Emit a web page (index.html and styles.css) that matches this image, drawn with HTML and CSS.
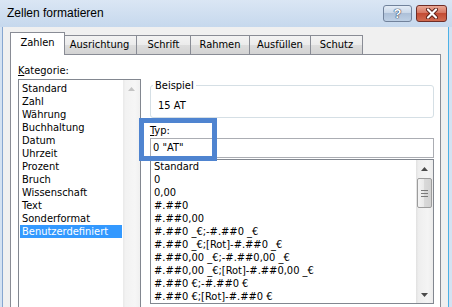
FILE: index.html
```html
<!DOCTYPE html>
<html lang="de">
<head>
    <meta charset="UTF-8">
    <title>Zellen formatieren</title>
    <link rel="stylesheet" href="styles.css">
</head>
<body>
    <div class="window">
        <div class="titlebar">
            <span class="title">Zellen formatieren</span>
            <div class="caption-buttons">
                <div class="cap-btn help">?</div>
                <div class="cap-btn close">
                    <svg width="14" height="11" viewBox="0 0 14 11">
                        <path d="M3 1.5 L11 9.5 M11 1.5 L3 9.5" stroke="#5b1f16" stroke-width="4" stroke-linecap="round"/>
                        <path d="M3 1.5 L11 9.5 M11 1.5 L3 9.5" stroke="#fff" stroke-width="2.2" stroke-linecap="round"/>
                    </svg>
                </div>
            </div>
        </div>

        <div class="client">
            <div class="tabs">
                <div class="tab active">Zahlen</div>
                <div class="tab">Ausrichtung</div>
                <div class="tab">Schrift</div>
                <div class="tab">Rahmen</div>
                <div class="tab">Ausfüllen</div>
                <div class="tab">Schutz</div>
            </div>

            <div class="panel">
                <div class="col-left">
                    <div class="label"><u>K</u>ategorie:</div>
                    <div class="listbox cat-list">
                        <ul class="items">
                            <li>Standard</li>
                            <li>Zahl</li>
                            <li>Währung</li>
                            <li>Buchhaltung</li>
                            <li>Datum</li>
                            <li>Uhrzeit</li>
                            <li>Prozent</li>
                            <li>Bruch</li>
                            <li>Wissenschaft</li>
                            <li>Text</li>
                            <li>Sonderformat</li>
                            <li class="selected">Benutzerdefiniert</li>
                        </ul>
                        <div class="scrollbar disabled">
                            <div class="arrow up">
                                <svg width="7" height="4" viewBox="0 0 7 4"><polygon points="0,4 3.5,0 7,4" fill="#c4c4c4"/></svg>
                            </div>
                        </div>
                    </div>
                </div>

                <div class="col-right">
                    <fieldset class="sample">
                        <legend>Beispiel</legend>
                        <div class="sample-value">15 AT</div>
                    </fieldset>

                    <div class="type-block">
                        <div class="label"><u>T</u>yp:</div>
                        <div class="textbox">0 "AT"</div>
                        <div class="highlight"></div>
                    </div>

                    <div class="listbox fmt-list">
                        <ul class="items">
                            <li>Standard</li>
                            <li>0</li>
                            <li>0,00</li>
                            <li>#.##0</li>
                            <li>#.##0,00</li>
                            <li>#.##0 _€;-#.##0 _€</li>
                            <li>#.##0 _€;[Rot]-#.##0 _€</li>
                            <li>#.##0,00 _€;-#.##0,00 _€</li>
                            <li>#.##0,00 _€;[Rot]-#.##0,00 _€</li>
                            <li>#.##0 €;-#.##0 €</li>
                            <li>#.##0 €;[Rot]-#.##0 €</li>
                        </ul>
                        <div class="scrollbar">
                            <div class="arrow up">
                                <svg width="7" height="4" viewBox="0 0 7 4"><polygon points="0,4 3.5,0 7,4" fill="#4a4a4a"/></svg>
                            </div>
                            <div class="thumb"><span class="grip"></span></div>
                            <div class="arrow down">
                                <svg width="7" height="4" viewBox="0 0 7 4"><polygon points="0,0 3.5,4 7,0" fill="#4a4a4a"/></svg>
                            </div>
                        </div>
                    </div>
                </div>
            </div>
        </div>
    </div>
</body>
</html>
```

FILE: styles.css
```css
* {
    box-sizing: border-box;
}

html, body {
    margin: 0;
    padding: 0;
}

body {
    width: 452px;
    height: 307px;
    overflow: hidden;
    background-color: #d4e2f2;
    font-family: "DejaVu Sans Condensed", "DejaVu Sans", sans-serif;
    font-stretch: condensed;
    font-size: 11px;
    color: #000;
}

.window {
    display: flex;
    flex-direction: column;
    height: 307px;
    overflow: hidden;
}

/* title bar */
.titlebar {
    flex: none;
    height: 27px;
    display: flex;
    align-items: flex-start;
    padding: 0 5px 0 7px;
    background: linear-gradient(#dae6f4, #c6d8ed);
}

.title {
    font-family: "Liberation Sans", Arial, sans-serif;
    font-stretch: normal;
    font-size: 12px;
    line-height: 27px;
}

.caption-buttons {
    display: flex;
    gap: 4px;
    margin-left: auto;
    margin-top: 5px;
}

.cap-btn {
    height: 17px;
    border-radius: 3px;
    display: flex;
    align-items: center;
    justify-content: center;
}

.help {
    width: 29px;
    border: 1px solid #71829b;
    background: linear-gradient(#e4ecf6, #cad8e9 45%, #adc0d8 50%, #bed0e5);
    color: #fff;
    font-family: "Liberation Sans", Arial, sans-serif;
    font-size: 13px;
    font-weight: bold;
    text-shadow: 0 0 1px #2c3e5c, 0 0 1px #2c3e5c, 0 0 1px #2c3e5c;
}

.close {
    width: 31px;
    border: 1px solid #6f2d27;
    background: linear-gradient(#eaa896, #d67762 45%, #c34c34 50%, #d16b50);
}

/* client area */
.client {
    flex: 1;
    display: flex;
    flex-direction: column;
    margin: 0 3px 0 2px;
    padding: 5px 7px 0;
    border-left: 1px solid #86a6d0;
    border-right: 1px solid #4cb1e6;
    background-color: #f0f0f0;
}

.tabs {
    flex: none;
    display: flex;
    align-items: flex-end;
    height: 22px;
    padding-left: 2px;
    position: relative;
    z-index: 1;
}

.tab {
    height: 19px;
    line-height: 18px;
    text-align: center;
    margin-left: -1px;
    border: 1px solid #898c95;
    border-bottom: none;
    background: linear-gradient(#f3f3f3, #ebebeb 50%, #dddddd 50%, #d3d3d3);
    white-space: nowrap;
}

.tab.active {
    width: 55px;
    height: 23px;
    line-height: 20px;
    margin: 0 -2px -1px -2px;
    background: #fff;
    position: relative;
    z-index: 2;
}

.tab:nth-child(2) { width: 75px; }
.tab:nth-child(3) { width: 55px; }
.tab:nth-child(4) { width: 60px; }
.tab:nth-child(5) { width: 62px; }
.tab:nth-child(6) { width: 53px; }

.panel {
    flex: none;
    display: flex;
    gap: 9px;
    width: 431px;
    height: 270px;
    padding: 9px 6px 0 7px;
    border: 1px solid #898c95;
    background-color: #fff;
}

.label {
    line-height: 13px;
    height: 13px;
}

.col-left {
    width: 123px;
    display: flex;
    flex-direction: column;
    gap: 2px;
}

.col-right {
    width: 284px;
}

/* list boxes */
.listbox {
    display: flex;
    border: 1px solid #828790;
    background-color: #fff;
}

.cat-list {
    height: 240px;
}

.fmt-list {
    height: 145px;
    margin-top: 1px;
}

.items {
    flex: 1;
    list-style: none;
    margin: 0;
    padding: 2px 1px;
}

.items li {
    line-height: 13px;
    padding-left: 2px;
    white-space: nowrap;
}

.items li.selected {
    background-color: #3399ff;
    color: #fff;
}

.fmt-list .items {
    padding: 0 0 0 1px;
    overflow: hidden;
}

/* scrollbars */
.scrollbar {
    flex: none;
    width: 17px;
    display: flex;
    flex-direction: column;
    background: linear-gradient(to right, #e1e1e1, #eeeeee 15%, #f4f4f4 70%, #ececec);
}

.scrollbar.disabled {
    background: linear-gradient(to right, #e9e9e9, #f2f2f2 15%, #f6f6f6 70%, #f0f0f0);
}

.arrow {
    height: 17px;
    display: flex;
    align-items: center;
    justify-content: center;
}

.arrow.down {
    margin-top: auto;
}

.thumb {
    height: 30px;
    margin: 1px 1px 0;
    border: 1px solid #9c9c9c;
    border-radius: 2px;
    background: linear-gradient(to right, #f4f4f4, #e8e8e8 50%, #d9d9d9 50%, #d2d2d2);
    display: flex;
    align-items: center;
    justify-content: center;
}

.grip {
    width: 7px;
    height: 7px;
    background: repeating-linear-gradient(#7a7a7a 0 1px, transparent 1px 3px);
}

/* sample group */
.sample {
    margin: 15px 0 0;
    padding: 7px 7px 5px;
    border: 1px solid #d5dfe5;
    border-radius: 3px;
}

.sample legend {
    padding: 0 2px;
    margin-left: -5px;
    line-height: 13px;
}

.sample-value {
    line-height: 13px;
}

.type-block {
    position: relative;
    margin-top: 6px;
}

.textbox {
    height: 20px;
    margin-top: 1px;
    padding-left: 2px;
    line-height: 18px;
    border: 1px solid #abadb3;
    background-color: #fff;
}

/* annotation frame drawn over the Typ field */
.highlight {
    position: absolute;
    left: -11px;
    top: -6px;
    width: 78px;
    height: 43px;
    border: 5px solid #4f84d0;
}
```
